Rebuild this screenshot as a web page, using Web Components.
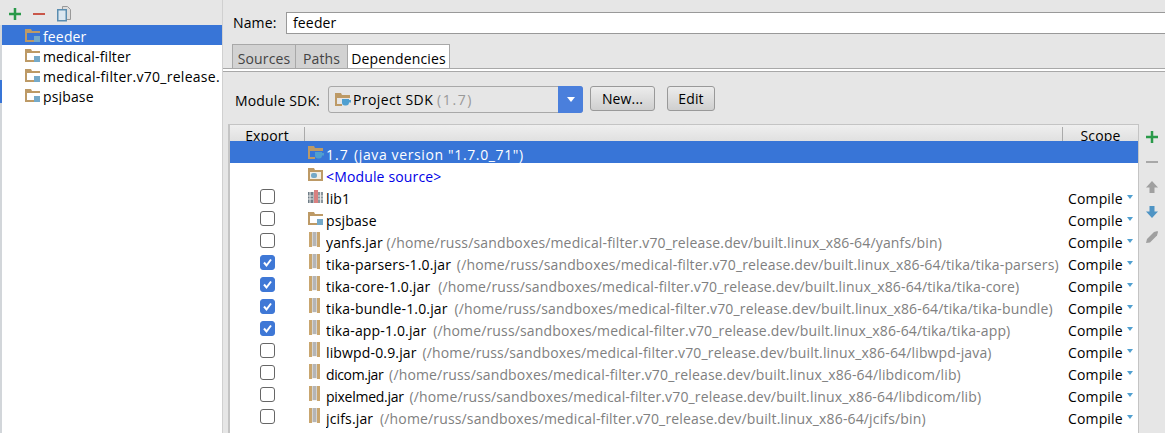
<!DOCTYPE html>
<html>
<head>
<meta charset="utf-8">
<style>
  html, body { margin: 0; height: 100%; overflow: hidden; }
  body { background: #e6e6e6; font: 14px "Open Sans", "Noto Sans", sans-serif; letter-spacing: 0.15px; color: #000; }
</style>
</head>
<body>
<svg width="0" height="0" style="position:absolute">
  <defs>
    <symbol id="module" viewBox="0 0 16 16">
      <path d="M0 1h6l1 2h8v2H2v7h7v2H0z" fill="#bd9a66"/>
      <rect x="9" y="8" width="6" height="6" fill="#74a9c9"/>
    </symbol>
    <symbol id="sdk" viewBox="0 0 16 16">
      <path d="M0 1h6l1 2h8v3H2v6h5v2H0z" fill="#bd9a66"/>
      <path d="M7 7h7v3.5a3 3 0 0 1-3 3h-1a3 3 0 0 1-3-3z" fill="#4f9fd0"/>
      <path d="M14 8h2v2.500h-2z" fill="#4f9fd0"/>
    </symbol>
    <symbol id="source" viewBox="0 0 16 16">
      <path d="M0 1h6l1 2h8v11H0z" fill="#bd9a66"/>
      <rect x="2" y="5" width="11" height="7" fill="#f2efe6"/>
      <rect x="3" y="6" width="6" height="5" rx="2" fill="#74a9c9"/>
    </symbol>
    <symbol id="lib" viewBox="0 0 16 16">
      <rect x="0" y="3" width="5" height="11" fill="#6e7c86"/>
      <rect x="5" y="3" width="1" height="11" fill="#b4babe"/>
      <rect x="6" y="1" width="4" height="13" fill="#d98080"/>
      <rect x="10" y="3" width="5" height="11" fill="#8b979e"/>
      <path d="M0 7h5M0 10h5M10 7h5M10 10h5M2 3v11M12.500 3v11" stroke="#e6e6e6" stroke-width="1"/>
    </symbol>
    <symbol id="jar" viewBox="0 0 16 16">
      <rect x="1" y="0" width="3" height="15" fill="#c9a66f"/>
      <rect x="9" y="0" width="3" height="15" fill="#c9a66f"/>
      <path d="M4 0h5v15H4z" fill="#f4f4f4"/>
      <path d="M4.500 1h4M4.500 3h4M4.500 5h4M4.500 7h4M4.500 9h4M4.500 11h4M4.500 13h4" stroke="#777" stroke-width="1"/>
    </symbol>
  </defs>
</svg>

<template id="module-row-tpl">
  <style>
    :host { display: flex; align-items: center; height: 20px; box-sizing: border-box; padding: 2px 0 0 23px; gap: 2px; white-space: nowrap; overflow: hidden; }
    :host([selected]) { background: #3875d7; color: #fff; }
    svg { width: 16px; height: 16px; flex: none; }
  </style>
  <svg><use href="#module"></use></svg>
  <slot></slot>
</template>

<template id="dep-row-tpl">
  <style>
    :host { display: flex; align-items: center; height: 22px; white-space: nowrap; }
    :host([selected]) { background: #3875d7; color: #fff; }
    .check { width: 78px; flex: none; display: flex; justify-content: center; padding-right: 3px; box-sizing: border-box; }
    .box { width: 13px; height: 13px; border: 1px solid #666; border-radius: 3px; background: #fff; display: block; }
    :host([checked]) .box { background: #3f78d6; border-color: #3f78d6; }
    :host([nocheck]) .box { visibility: hidden; }
    .box svg { display: block; width: 13px; height: 13px; visibility: hidden; }
    :host([checked]) .box svg { visibility: visible; }
    .icon { width: 16px; height: 16px; flex: none; margin: 2px 2px 0 0; }
    :host([icon="jar"]) .icon { margin-top: 0; }
    .main { flex: 1; min-width: 0; overflow: hidden; padding-top: 4px; }
    .path { color: #808080; margin-left: var(--gap, 2px); letter-spacing: var(--path-ls, 0.15px); }
    :host([selected]) .path { color: #fff; }
    :host([source]) .main { color: #0000e6; }
    .scope { width: 73px; flex: none; display: flex; align-items: center; padding: 4px 0 0 3px; box-sizing: border-box; letter-spacing: 0.15px; }
    .scope i { width: 0; height: 0; margin-left: 4px; margin-top: -2px; border: 3.5px solid transparent; border-top: 4px solid #4f9fd0; border-bottom: 0; }
  </style>
  <span class="check"><span class="box"><svg viewBox="0 0 13 13"><path d="M3 6.5 5.5 9.5 10 3.5" fill="none" stroke="#fff" stroke-width="2"/></svg></span></span>
  <svg class="icon"><use></use></svg>
  <span class="main"><slot></slot><span class="path"></span></span>
  <span class="scope">Compile<i></i></span>
</template>

<template id="project-structure-tpl">
  <style>
    :host { display: flex; height: 433px; overflow: hidden; }
    .side { width: 222px; flex: none; border-right: 1px solid #d0d0d0; display: flex; flex-direction: column; position: relative; }
    .side::after { content: ""; position: absolute; left: 0; top: 80px; width: 2px; height: 23px; background: #3875d7; }
    .tools { height: 25px; flex: none; box-sizing: border-box; padding: 2px 0 0 7px; display: flex; gap: 8px; align-items: center; }
    .tools svg { width: 16px; height: 16px; display: block; }
    .list { flex: 1; background: #fff; border-left: 2px solid #d2d6da; overflow: hidden; }
    .main { flex: 1; min-width: 0; display: flex; flex-direction: column; }
    .name { display: flex; align-items: center; padding: 12px 0 0 10px; height: 21px; }
    .name label { width: 53px; flex: none; }
    .name div { flex: 1; height: 20px; box-sizing: content-box; background: #fff; border: 1px solid #999; border-right: 0; padding-left: 6px; line-height: 20px; }
    .tabs { display: flex; margin: 11px 0 0 9px; height: 24px; }
    .tabs span { box-sizing: border-box; border: 1px solid #a8a8a8; border-bottom: 0; border-right: 0; background: #d2d2d2; color: #444; padding: 4px 0 0; height: 24px; line-height: 20px; text-align: center; }
    .tabs span:nth-child(1) { width: 63px; }
    .tabs span:nth-child(2) { width: 52px; }
    .tabs span.on { width: 103px; background: #fff; color: #000; border-right: 1px solid #a8a8a8; }
    .rule { height: 2px; border-top: 1px solid #a8a8a8; border-bottom: 1px solid #a8a8a8; background: #fff; margin-left: -1px; }
    .sdk { display: flex; align-items: center; padding: 14px 0 0 12px; height: 27px; }
    .sdk label { width: 93px; flex: none; padding-top: 2px; }
    .combo { width: 255px; height: 27px; box-sizing: border-box; flex: none; display: flex; align-items: center; background: #e6e6e6; border: 1px solid #a8a8a8; border-radius: 3px; padding-left: 6px; position: relative; gap: 2px; letter-spacing: 0.4px; }
    .combo svg { width: 16px; height: 16px; }
    .combo em { font-style: normal; color: #999; margin-left: 2px; letter-spacing: 1.6px; }
    .combo b { position: absolute; right: -1px; top: -1px; width: 25px; height: 27px; background: #4a7fdc; border-radius: 0 3px 3px 0; display: flex; justify-content: center; align-items: center; }
    .combo b::after { content: ""; border: 4px solid transparent; border-top: 5px solid #fff; border-bottom: 0; }
    .btn { box-sizing: border-box; height: 25px; margin-top: -2px; border: 1px solid #999; border-radius: 3px; background: linear-gradient(#ececec, #cfcfcf); display: flex; align-items: center; justify-content: center; }
    .btn.new { width: 65px; margin-left: 7px; }
    .btn.edit { width: 48px; margin-left: 12px; }
    .table-wrap { flex: 1; min-height: 0; margin: 11px 0 0 5px; display: flex; }
    .table { flex: 1; min-width: 0; border: 1px solid #c4c4c4; border-left-width: 2px; border-bottom: 0; background: #fff; }
    .head { height: 16px; display: flex; background: linear-gradient(#efefef, #e0e0e0); overflow: hidden; }
    .head span:nth-child(1) { width: 74px; text-align: center; border-right: 1px solid #aaa; height: 14px; margin-top: 2px; line-height: 18px; }
    .head span:nth-child(2) { flex: 1; }
    .head span:nth-child(3) { width: 75px; border-left: 1px solid #aaa; height: 14px; margin-top: 2px; line-height: 18px; text-align: center; }
    .side-tools { width: 26px; flex: none; display: flex; flex-direction: column; align-items: center; padding-top: 5px; gap: 9px; }
    .side-tools svg { width: 16px; height: 16px; display: block; }
  </style>
  <div class="side">
    <div class="tools">
      <svg viewBox="0 0 16 16"><path d="M2 8h12M8 2v12" stroke="#2a9a4a" stroke-width="2.500"/></svg>
      <svg viewBox="0 0 16 16"><path d="M2 8h12" stroke="#c9574a" stroke-width="2"/></svg>
      <svg viewBox="0 0 16 16"><path d="M7.500 .5h5l3 3v10h-8z" fill="#ddd" stroke="#999"/><path d="M2.750 3.750h8.500v11h-8.500z" fill="#dbe7f0" stroke="#5a8db0" stroke-width="1.500"/></svg>
    </div>
    <div class="list"><slot name="modules"></slot></div>
  </div>
  <div class="main">
    <div class="name"><label>Name:</label><div>feeder</div></div>
    <div class="tabs"><span>Sources</span><span>Paths</span><span class="on">Dependencies</span></div>
    <div class="rule"></div>
    <div class="sdk">
      <label>Module SDK:</label>
      <div class="combo"><svg><use href="#sdk"></use></svg>Project SDK <em>(1.7)</em><b></b></div>
      <div class="btn new">New...</div>
      <div class="btn edit">Edit</div>
    </div>
    <div class="table-wrap">
      <div class="table">
        <div class="head"><span>Export</span><span></span><span>Scope</span></div>
        <slot name="deps"></slot>
      </div>
      <div class="side-tools">
        <svg viewBox="0 0 16 16"><path d="M2 8h12M8 2v12" stroke="#2a9a4a" stroke-width="2.500"/></svg>
        <svg viewBox="0 0 16 16"><path d="M2 8h12" stroke="#a8a8a8" stroke-width="2"/></svg>
        <svg viewBox="0 0 16 16"><path d="M8 2l6 6.500h-3.500V14h-5V8.500H2z" fill="#a0a0a0"/></svg>
        <svg viewBox="0 0 16 16"><path d="M8 14l6-6.500h-3.500V2h-5v5.500H2z" fill="#4f94c4"/></svg>
        <svg viewBox="0 0 16 16"><path d="M2 14l1-4 7-7 3.500-1 .5 1-1 3.500-7 7z" fill="#a0a0a0"/></svg>
      </div>
    </div>
  </div>
</template>

<project-structure>
  <module-row slot="modules" selected>feeder</module-row>
  <module-row slot="modules">medical-filter</module-row>
  <module-row slot="modules" style="letter-spacing:.27px">medical-filter.v70_release.</module-row>
  <module-row slot="modules">psjbase</module-row>

  <dep-row slot="deps" selected nocheck icon="sdk" noscope path="(java version &quot;1.7.0_71&quot;)" style="--gap:1px;--path-ls:.63px;letter-spacing:1px">1.7</dep-row>
  <dep-row slot="deps" nocheck source icon="source" noscope>&lt;Module source&gt;</dep-row>
  <dep-row slot="deps" icon="lib">lib1</dep-row>
  <dep-row slot="deps" icon="module">psjbase</dep-row>
  <dep-row slot="deps" icon="jar" path="(/home/russ/sandboxes/medical-filter.v70_release.dev/built.linux_x86-64/yanfs/bin)" style="--gap:0px">yanfs.jar</dep-row>
  <dep-row slot="deps" checked icon="jar" path="(/home/russ/sandboxes/medical-filter.v70_release.dev/built.linux_x86-64/tika/tika-parsers)">tika-parsers-1.0.jar</dep-row>
  <dep-row slot="deps" checked icon="jar" path="(/home/russ/sandboxes/medical-filter.v70_release.dev/built.linux_x86-64/tika/tika-core)" style="--gap:4px">tika-core-1.0.jar</dep-row>
  <dep-row slot="deps" checked icon="jar" path="(/home/russ/sandboxes/medical-filter.v70_release.dev/built.linux_x86-64/tika/tika-bundle)" style="--gap:3px">tika-bundle-1.0.jar</dep-row>
  <dep-row slot="deps" checked icon="jar" path="(/home/russ/sandboxes/medical-filter.v70_release.dev/built.linux_x86-64/tika/tika-app)" style="--gap:3px">tika-app-1.0.jar</dep-row>
  <dep-row slot="deps" icon="jar" path="(/home/russ/sandboxes/medical-filter.v70_release.dev/built.linux_x86-64/libwpd-java)">libwpd-0.9.jar</dep-row>
  <dep-row slot="deps" icon="jar" path="(/home/russ/sandboxes/medical-filter.v70_release.dev/built.linux_x86-64/libdicom/lib)" style="letter-spacing:-.4px">dicom.jar</dep-row>
  <dep-row slot="deps" icon="jar" path="(/home/russ/sandboxes/medical-filter.v70_release.dev/built.linux_x86-64/libdicom/lib)" style="letter-spacing:-.27px">pixelmed.jar</dep-row>
  <dep-row slot="deps" icon="jar" path="(/home/russ/sandboxes/medical-filter.v70_release.dev/built.linux_x86-64/jcifs/bin)" style="--gap:3px">jcifs.jar</dep-row>
</project-structure>

<script>
  // copy the symbols into each shadow root so <use href="#..."> resolves there
  const symbols = document.querySelector("svg defs").outerHTML;

  function shadowFrom(el, id) {
    const root = el.attachShadow({ mode: "open" });
    root.appendChild(document.getElementById(id).content.cloneNode(true));
    const holder = document.createElementNS("http://www.w3.org/2000/svg", "svg");
    holder.setAttribute("width", "0");
    holder.setAttribute("height", "0");
    holder.style.position = "absolute";
    holder.innerHTML = symbols;
    root.appendChild(holder);
    return root;
  }

  customElements.define("module-row", class extends HTMLElement {
    constructor() {
      super();
      shadowFrom(this, "module-row-tpl");
    }
  });

  customElements.define("dep-row", class extends HTMLElement {
    static observedAttributes = [ "icon", "path", "noscope" ];

    constructor() {
      super();
      shadowFrom(this, "dep-row-tpl");
    }

    attributeChangedCallback(name, oldValue, newValue) {
      switch (name) {
        case "icon":
          this.shadowRoot.querySelector(".icon use").setAttribute("href", "#" + newValue);
          break;
        case "path":
          this.shadowRoot.querySelector(".path").textContent = " " + newValue;
          break;
        case "noscope":
          this.shadowRoot.querySelector(".scope").style.visibility = "hidden";
          break;
      }
    }
  });

  customElements.define("project-structure", class extends HTMLElement {
    constructor() {
      super();
      shadowFrom(this, "project-structure-tpl");
    }
  });
</script>
</body>
</html>
